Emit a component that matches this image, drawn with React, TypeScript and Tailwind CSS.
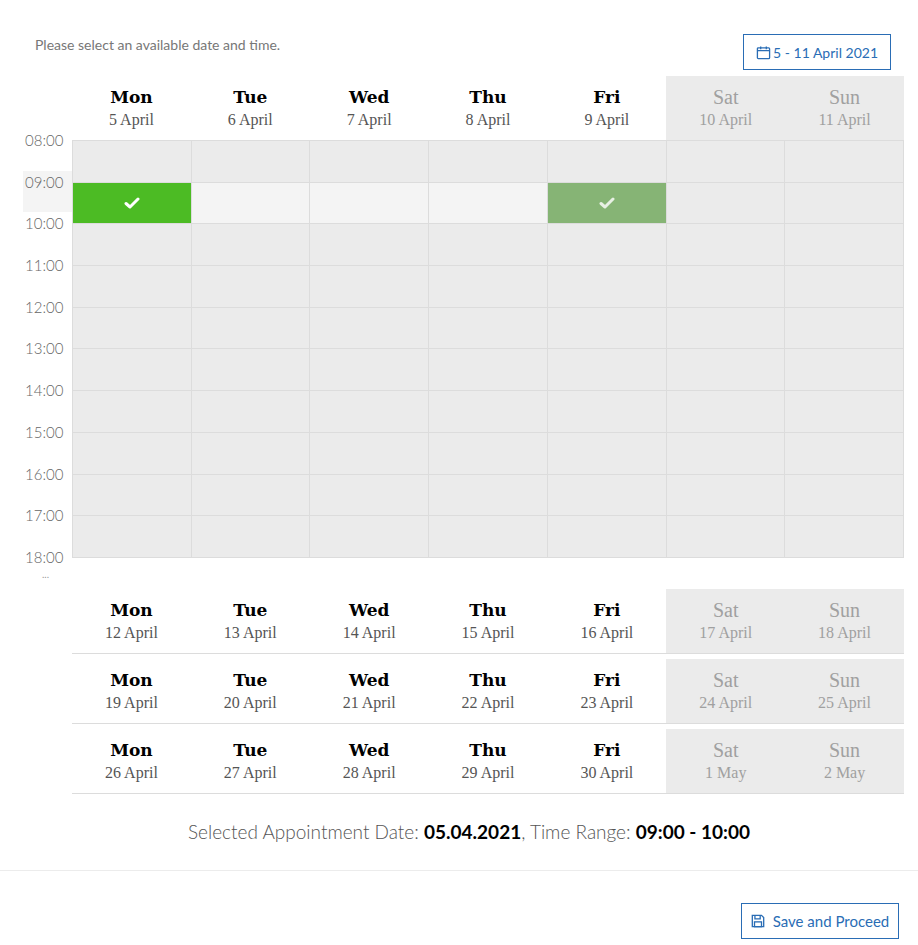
import React from "react";

const days = [
  ["Mon", "5 April"], ["Tue", "6 April"], ["Wed", "7 April"], ["Thu", "8 April"],
  ["Fri", "9 April"], ["Sat", "10 April"], ["Sun", "11 April"],
];
const weeks = [
  ["12 April", "13 April", "14 April", "15 April", "16 April", "17 April", "18 April"],
  ["19 April", "20 April", "21 April", "22 April", "23 April", "24 April", "25 April"],
  ["26 April", "27 April", "28 April", "29 April", "30 April", "1 May", "2 May"],
];
const names = ["Mon", "Tue", "Wed", "Thu", "Fri", "Sat", "Sun"];
const hours = ["08:00","09:00","10:00","11:00","12:00","13:00","14:00","15:00","16:00","17:00","18:00"];

function Check({ c }: { c: string }) {
  return (
    <svg width="16" height="12" viewBox="0 0 16 12"><path d="M2 6.5l4 3.5 8-8" fill="none" stroke={c} strokeWidth="3" strokeLinecap="round" strokeLinejoin="round"/></svg>
  );
}

function DayHead({ n, d, we }: { n: string; d: string; we: boolean }) {
  return (
    <div className={`flex flex-col items-center justify-center h-full ${we ? "bg-[#ebebeb]" : ""}`}>
      {we ? (
        <span className="text-[20px] leading-[24px] text-[#a0a0a0]" style={{ fontFamily: "'Liberation Serif', serif" }}>{n}</span>
      ) : (
        <span className="text-[17px] leading-[24px] font-bold text-black" style={{ fontFamily: "'DejaVu Serif', serif" }}>{n}</span>
      )}
      <span className={`text-[16px] leading-[22px] ${we ? "text-[#a0a0a0]" : "text-[#555]"}`} style={{ fontFamily: "'Liberation Serif', serif" }}>{d}</span>
    </div>
  );
}

export default function App() {
  return (
    <div className="w-[918px] h-[945px] bg-white relative" style={{ fontFamily: "Lato, 'Open Sans', sans-serif" }}>
      <div className="flex justify-between items-start pl-[35px] pr-[27px] pt-[34px]">
        <span className="text-[14px] text-[#777]">Please select an available date and time.</span>
        <button className="h-[36px] px-[12px] border border-[#2a6db5] text-[#2a6db5] text-[14px] flex items-center gap-[2px]">
          <svg width="15" height="15" viewBox="0 0 16 16" fill="none" stroke="#2a6db5" strokeWidth="1.4"><rect x="1.5" y="3" width="13" height="11.5" rx="1"/><path d="M1.5 6h13M5 1.5v3M11 1.5v3"/></svg>
          5 - 11 April 2021
        </button>
      </div>
      <div className="flex mt-[6px]">
        <div className="w-[72px] shrink-0 pt-[64px]">
          <div className="flex flex-col mt-[-11px]">
            {hours.map((h, i) => (
              <div key={h} className={`h-[41.7px] ml-[23px] pl-[2px] text-[15px] font-light text-[#666] ${i === 1 ? "bg-[#f4f4f4]" : ""}`}>{h}</div>
            ))}
          </div>
          <div className="pl-[42px] text-[10px] text-[#999] leading-[4px] mt-[-16px]">...</div>
        </div>
        <div className="w-[832px]">
          <div className="grid grid-cols-7 h-[64px]">
            {days.map(([n, d], i) => <DayHead key={n} n={n} d={d} we={i > 4} />)}
          </div>
          <div className="grid grid-cols-7 bg-[#ebebeb] border-l border-b border-[#dcdcdc]">
            {Array.from({ length: 10 }).map((_, r) =>
              names.map((_, c) => {
                let cls = "bg-[#ebebeb]";
                let inner: React.ReactNode = null;
                if (r === 1) {
                  if (c === 0) { cls = "bg-[#4cbb24]"; inner = <Check c="#fff" />; }
                  else if (c === 4) { cls = "bg-[#86b475]"; inner = <Check c="#e8f0e4" />; }
                  else if (c < 4) cls = "bg-[#f4f4f4]";
                }
                return (
                  <div key={`${r}-${c}`} className={`h-[41.7px] border-t border-r border-[#dcdcdc] flex items-center justify-center ${cls}`}>{inner}</div>
                );
              })
            )}
          </div>
          <div className="mt-[31px] flex flex-col gap-[5px]">
            {weeks.map((w, wi) => (
              <div key={wi} className="grid grid-cols-7 h-[65px] border-b border-[#dcdcdc]">
                {w.map((d, i) => <DayHead key={d} n={names[i]} d={d} we={i > 4} />)}
              </div>
            ))}
          </div>
        </div>
      </div>
      <div className="text-center text-[19px] text-[#555] font-light mt-[24px] pl-[20px]">
        Selected Appointment Date: <span className="font-bold text-black">05.04.2021</span>, Time Range: <span className="font-bold text-black">09:00 - 10:00</span>
      </div>
      <div className="border-t border-[#ececec] mt-[24px]" />
      <div className="flex justify-end pr-[19px] pt-[32px]">
        <button className="h-[36px] w-[158px] border border-[#2a6db5] text-[#2a6db5] text-[15px] flex items-center justify-center gap-[8px]">
          <svg width="14" height="14" viewBox="0 0 16 16" fill="none" stroke="#2a6db5" strokeWidth="1.5"><path d="M1.5 1.5h10.5l2.5 2.5v10.5h-13z"/><path d="M4.5 1.5v4h6v-4"/><rect x="4" y="9" width="8" height="5.5"/></svg>
          Save and Proceed
        </button>
      </div>
    </div>
  );
}
